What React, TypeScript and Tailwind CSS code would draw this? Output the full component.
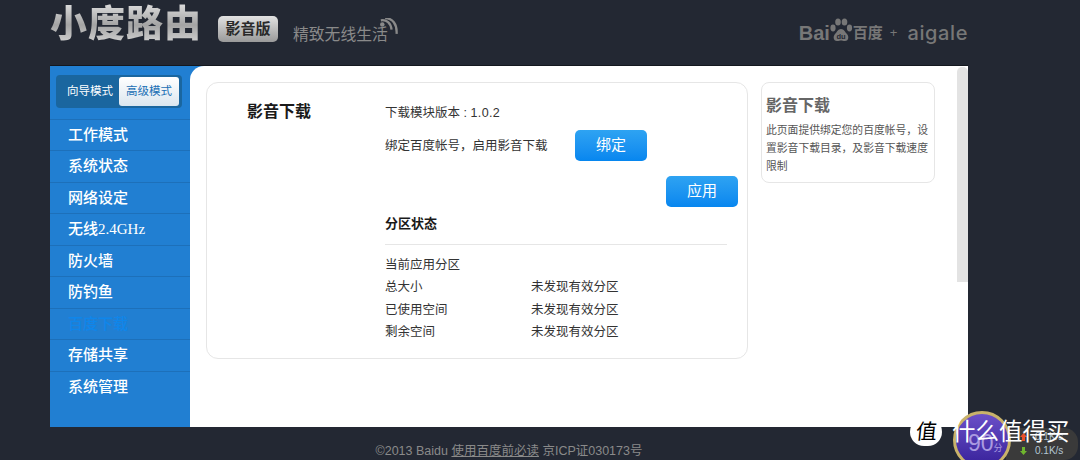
import React from "react";

const menu = ["工作模式", "系统状态", "网络设定", "无线2.4GHz", "防火墙", "防钓鱼", "百度下载", "存储共享", "系统管理"];
const rows = [
  ["总大小", "未发现有效分区"],
  ["已使用空间", "未发现有效分区"],
  ["剩余空间", "未发现有效分区"],
];

const cjk = "font-['Liberation_Sans','Noto_Sans_CJK_SC',sans-serif]";
const btn =
  "w-[72px] h-[31px] rounded-[5px] bg-gradient-to-b from-[#2ea3f2] to-[#0686ef] text-white text-[15px] flex items-center justify-center";

function Header() {
  return (
    <div className="h-[65px] flex items-start justify-between">
      <div className="flex items-start">
        <div className="mt-[3px] text-[37px] leading-[44px] font-black tracking-[1px] bg-gradient-to-b from-[#dedede] via-[#a4a4a4] to-[#dcdcdc] bg-clip-text text-transparent">
          小度路由
        </div>
        <div className="ml-[16px] mt-[16px] w-[60px] h-[26px] rounded-[5px] bg-gradient-to-b from-[#e2e2e2] to-[#9a9a9a] text-[#2a2a2a] text-[15px] font-bold flex items-center justify-center">
          影音版
        </div>
        <div className="relative ml-[15px] mt-[24px] text-[15.8px] leading-[22px] text-[#8a8a8a] whitespace-nowrap">
          精致无线生活
          <svg className="absolute left-[85px] top-[-6px]" width="20" height="16" viewBox="0 0 14 11" fill="none">
            <circle cx="3" cy="4.5" r="1.6" fill="#8a8a8a" />
            <path d="M2 1.5C6 0.8 9 3.5 9.5 8" stroke="#8a8a8a" strokeWidth="1.6" />
            <path d="M5 0C10 0 13.5 4 13 11" stroke="#8a8a8a" strokeWidth="1.6" />
          </svg>
        </div>
      </div>
      <div className="flex items-center mt-[20px] text-[#777777]">
        <span className="text-[20px] leading-[26px] font-bold">Bai</span>
        <svg width="24" height="27" viewBox="0 0 24 27" className="-mt-[8px] -ml-[1px]" fill="#777777">
          <ellipse cx="4" cy="12" rx="2.6" ry="3.4" />
          <ellipse cx="9" cy="6" rx="2.8" ry="3.6" />
          <ellipse cx="15.5" cy="6" rx="2.8" ry="3.6" />
          <ellipse cx="20.5" cy="12" rx="2.6" ry="3.4" />
          <path d="M12 13c-3 0-4 3-6 5s-2 7 2 7c2 0 3-.6 4-.6s2 .6 4 .6c4 0 4-5 2-7s-3-5-6-5z" />
          <text x="12" y="22.5" fontSize="7.5" fontWeight="700" textAnchor="middle" fill="#232833">du</text>
        </svg>
        <span className="text-[15px] leading-[26px] font-bold">百度</span>
        <span className="ml-[7px] text-[13px] leading-[26px]">+</span>
        <span className="ml-[10px] text-[20px] leading-[26px] tracking-[0.6px] font-medium font-['Inter',sans-serif]">aigale</span>
      </div>
    </div>
  );
}

function Sidebar() {
  return (
    <div className="w-[140px] shrink-0 bg-[#217fd2] pt-[9px]">
      <div className="ml-[6px] w-[126px] h-[33px] rounded-[4px] bg-[#1a669f] flex items-center justify-between pl-[11px] pr-[3px] text-[11.5px]">
        <span className="text-white">向导模式</span>
        <span className="w-[60px] h-[29px] rounded-[3px] bg-gradient-to-b from-white to-[#dbe6ef] text-[#1a6fb5] flex items-center justify-center">
          高级模式
        </span>
      </div>
      <div className="mt-[11px] border-t border-[#1d70ba]">
        {menu.map((item, i) => (
          <div
            key={item}
            className={`h-[31.45px] pl-[18px] flex items-center border-b border-[#1d70ba] text-[15px] font-medium font-['Liberation_Serif','Noto_Sans_CJK_SC',serif] ${
              i === 6 ? "text-[#0f86ea]" : "text-white"
            } ${i === 8 ? "border-b-0" : ""}`}
          >
            {item}
          </div>
        ))}
      </div>
    </div>
  );
}

function MainCard() {
  return (
    <div className="w-[542px] h-[277px] rounded-[12px] border border-[#e6e6e6] flex text-[12.5px] text-[#333333]">
      <div className="w-[178px] pl-[40px] pt-[18px] text-[16px] leading-[22px] font-bold text-[#1a1a1a]">影音下载</div>
      <div className="w-[353px]">
        <div className="pt-[22px] leading-[16px]">下载模块版本 : <span className="tracking-[0.4px]">1.0.2</span></div>
        <div className="mt-[9px] flex items-center">
          <span className="w-[190px] pt-[2px]">绑定百度帐号，启用影音下载</span>
          <button className={btn}>绑定</button>
        </div>
        <div className="mt-[15px] flex justify-end">
          <button className={btn}>应用</button>
        </div>
        <div className="mt-[7px] text-[13px] leading-[20px] font-bold text-[#1a1a1a]">分区状态</div>
        <div className="mt-[10px] w-[342px] border-t border-[#e6e6e6]" />
        <div className="mt-[9px] h-[22.3px] leading-[22px]">当前应用分区</div>
        {rows.map(([label, value]) => (
          <div key={label} className="h-[22.3px] leading-[22px] flex">
            <span className="w-[146px]">{label}</span>
            <span>{value}</span>
          </div>
        ))}
      </div>
    </div>
  );
}

function HelpCard() {
  return (
    <div className="ml-[13px] w-[174px] h-[101px] rounded-[8px] border border-[#e6e6e6] pl-[4px] pr-[2px] pt-[11px]">
      <div className="text-[16px] leading-[24px] font-bold text-[#666666]">影音下载</div>
      <div className="mt-[3px] text-[10.8px] leading-[18px] text-[#555555]">
        此页面提供绑定您的百度帐号，设置影音下载目录，及影音下载速度限制
      </div>
    </div>
  );
}

function Arrow({ color, down }: { color: string; down?: boolean }) {
  return (
    <svg width="7" height="8" viewBox="0 0 7 8" className={down ? "" : "rotate-180"} fill={color}>
      <path d="M2 0h3v4h2L3.5 8 0 4h2z" />
    </svg>
  );
}

function Overlay() {
  return (
    <>
      <div className="absolute left-[910px] top-[418px] w-[32px] h-[28px] rounded-full bg-white text-black text-[21px] leading-[27px] text-center">
        <span className="inline-block -skew-x-6">值</span>
      </div>
      <div className="absolute left-[1006px] top-[428px] w-[72px] h-[32px] rounded-tl-[14px] rounded-r-[14px] bg-[#3a3a3a] pl-[14px] pt-[2px] text-[10px] leading-[14px] text-[#b4c6d2]">
        <div className="flex items-center gap-[8px]">
          <Arrow color="#e8502a" />
          <span>0.1K/s</span>
        </div>
        <div className="flex items-center gap-[8px]">
          <Arrow color="#6fb52e" down />
          <span>0.1K/s</span>
        </div>
      </div>
      <div className="absolute left-[953px] top-[411px] w-[58px] h-[58px] rounded-full border-[3px] border-[#c9b26a] bg-gradient-to-b from-[#6b4fc8] to-[#38209a] pt-[16px] pl-[12px] text-[#a99ae0] text-[23px] leading-[26px]">
        90<span className="text-[9px]">分</span>
      </div>
      <div className="absolute left-[952px] top-[417px] text-white text-[23.5px] leading-[30px] whitespace-nowrap">
        什么值得买
      </div>
    </>
  );
}

export default function App() {
  return (
    <div className={`relative w-[1080px] h-[460px] overflow-hidden bg-[#232833] ${cjk}`}>
      <div className="ml-[50px] w-[918px]">
        <Header />
        <div className="h-[362px] flex bg-[#217fd2] border-t border-[#14181f]">
          <Sidebar />
          <div className="flex-1 bg-white rounded-tl-[14px] flex pl-[16px] pt-[16px]">
            <MainCard />
            <HelpCard />
            <div className="ml-[22px] -mt-[15px] w-[11px] h-[215px] rounded-t-[5px] bg-[#e3e3e3]" />
          </div>
        </div>
      </div>
      <div className="text-center w-[1018px] mt-[15px] text-[12.5px] leading-[18px] text-[#8a8a8a]">
        ©2013 Baidu <span className="underline">使用百度前必读</span> 京ICP证030173号
      </div>
      <Overlay />
    </div>
  );
}
